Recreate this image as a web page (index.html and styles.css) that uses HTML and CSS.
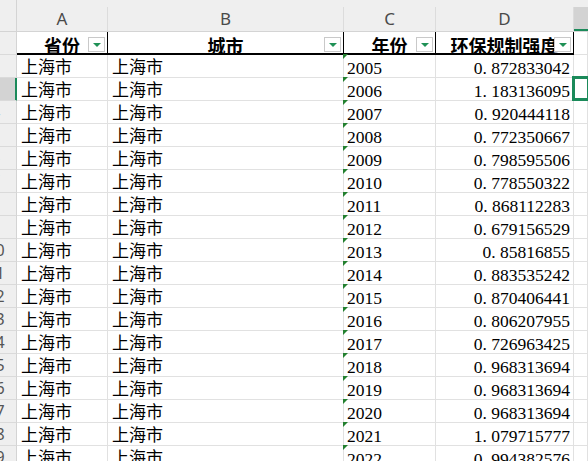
FILE: index.html
```html
<!DOCTYPE html>
<html lang="zh-CN">
<head>
<meta charset="utf-8">
<title>Sheet</title>
<link rel="stylesheet" href="styles.css">
</head>
<body>
<div class="sheet">
  <div class="corner"></div>
  <div class="ch"><span class="lbl">A</span></div>
  <div class="ch"><span class="lbl">B</span></div>
  <div class="ch"><span class="lbl">C</span></div>
  <div class="ch"><span class="lbl">D</span></div>
  <div class="ch sel"><span class="lbl"></span></div>

  <div class="rh"><span>1</span></div>
  <div class="hd">省份<span class="fb"></span></div>
  <div class="hd">城市<span class="fb"></span></div>
  <div class="hd">年份<span class="fb"></span></div>
  <div class="hd">环保规制强度<span class="fb"></span></div>
  <div class="cell hd-e"></div>

  <div class="rh"><span>2</span></div><div class="cell txt">上海市</div><div class="cell txt">上海市</div><div class="cell yr">2005</div><div class="cell val">0<span class="dot">.</span>872833042</div><div class="cell"></div>
  <div class="rh active"><span>3</span></div><div class="cell txt">上海市</div><div class="cell txt">上海市</div><div class="cell yr">2006</div><div class="cell val">1<span class="dot">.</span>183136095</div><div class="cell cur"></div>
  <div class="rh"><span>4</span></div><div class="cell txt">上海市</div><div class="cell txt">上海市</div><div class="cell yr">2007</div><div class="cell val">0<span class="dot">.</span>920444118</div><div class="cell"></div>
  <div class="rh"><span>5</span></div><div class="cell txt">上海市</div><div class="cell txt">上海市</div><div class="cell yr">2008</div><div class="cell val">0<span class="dot">.</span>772350667</div><div class="cell"></div>
  <div class="rh"><span>6</span></div><div class="cell txt">上海市</div><div class="cell txt">上海市</div><div class="cell yr">2009</div><div class="cell val">0<span class="dot">.</span>798595506</div><div class="cell"></div>
  <div class="rh"><span>7</span></div><div class="cell txt">上海市</div><div class="cell txt">上海市</div><div class="cell yr">2010</div><div class="cell val">0<span class="dot">.</span>778550322</div><div class="cell"></div>
  <div class="rh"><span>8</span></div><div class="cell txt">上海市</div><div class="cell txt">上海市</div><div class="cell yr">2011</div><div class="cell val">0<span class="dot">.</span>868112283</div><div class="cell"></div>
  <div class="rh"><span>9</span></div><div class="cell txt">上海市</div><div class="cell txt">上海市</div><div class="cell yr">2012</div><div class="cell val">0<span class="dot">.</span>679156529</div><div class="cell"></div>
  <div class="rh"><span>10</span></div><div class="cell txt">上海市</div><div class="cell txt">上海市</div><div class="cell yr">2013</div><div class="cell val">0<span class="dot">.</span>85816855</div><div class="cell"></div>
  <div class="rh"><span>11</span></div><div class="cell txt">上海市</div><div class="cell txt">上海市</div><div class="cell yr">2014</div><div class="cell val">0<span class="dot">.</span>883535242</div><div class="cell"></div>
  <div class="rh"><span>12</span></div><div class="cell txt">上海市</div><div class="cell txt">上海市</div><div class="cell yr">2015</div><div class="cell val">0<span class="dot">.</span>870406441</div><div class="cell"></div>
  <div class="rh"><span>13</span></div><div class="cell txt">上海市</div><div class="cell txt">上海市</div><div class="cell yr">2016</div><div class="cell val">0<span class="dot">.</span>806207955</div><div class="cell"></div>
  <div class="rh"><span>14</span></div><div class="cell txt">上海市</div><div class="cell txt">上海市</div><div class="cell yr">2017</div><div class="cell val">0<span class="dot">.</span>726963425</div><div class="cell"></div>
  <div class="rh"><span>15</span></div><div class="cell txt">上海市</div><div class="cell txt">上海市</div><div class="cell yr">2018</div><div class="cell val">0<span class="dot">.</span>968313694</div><div class="cell"></div>
  <div class="rh"><span>16</span></div><div class="cell txt">上海市</div><div class="cell txt">上海市</div><div class="cell yr">2019</div><div class="cell val">0<span class="dot">.</span>968313694</div><div class="cell"></div>
  <div class="rh"><span>17</span></div><div class="cell txt">上海市</div><div class="cell txt">上海市</div><div class="cell yr">2020</div><div class="cell val">0<span class="dot">.</span>968313694</div><div class="cell"></div>
  <div class="rh"><span>18</span></div><div class="cell txt">上海市</div><div class="cell txt">上海市</div><div class="cell yr">2021</div><div class="cell val">1<span class="dot">.</span>079715777</div><div class="cell"></div>
  <div class="rh"><span>19</span></div><div class="cell txt">上海市</div><div class="cell txt">上海市</div><div class="cell yr">2022</div><div class="cell val">0<span class="dot">.</span>994382576</div><div class="cell"></div>
</div>
</body>
</html>
```

FILE: styles.css
```css
html, body {
  margin: 0;
  padding: 0;
  background: #ffffff;
  overflow: hidden;
}

.sheet {
  display: grid;
  grid-template-columns: 17px 91px 236px 92px 138px 1fr;
  grid-template-rows: 32px 23px repeat(18, 23px);
  width: 588px;
  height: 461px;
  overflow: hidden;
}

.sheet > div {
  box-sizing: border-box;
  min-width: 0;
  min-height: 0;
}

/* column header bar */
.corner {
  background: #efefef;
  border-right: 1px solid #d4d4d4;
  border-bottom: 1px solid #d4d4d4;
}

.ch {
  background: #efefef;
  border-bottom: 1px solid #d4d4d4;
  padding-top: 7px;
}

.ch .lbl {
  display: flex;
  align-items: center;
  justify-content: center;
  height: 24px;
  box-sizing: border-box;
  border-right: 1px solid #dcdcdc;
  font-family: "Noto Sans", "Liberation Sans", sans-serif;
  font-size: 17px;
  color: #4a4a4a;
  padding-bottom: 1px;
}

.ch.sel .lbl {
  background: #d3d3d3;
  border-right: none;
  box-shadow: inset 0 -2px 0 #1b8a5a;
}

/* row header */
.rh {
  background: #efefef;
  border-right: 1px solid #d4d4d4;
  border-bottom: 1px solid #dadada;
  overflow: hidden;
  font-family: "Noto Sans", "Liberation Sans", sans-serif;
  font-size: 16px;
  line-height: 22px;
  color: #555555;
}

.rh span {
  display: block;
  width: 37px;
  margin-left: -23px;
  text-align: center;
}

.rh.active {
  background: #d3d3d3;
  border-right-color: #1b8a5a;
  box-shadow: inset -1px 0 0 #1b8a5a;
  color: #1b6e48;
}

/* table header row */
.hd {
  position: relative;
  display: flex;
  justify-content: center;
  border-right: 1px solid #000000;
  border-bottom: 2px solid #000000;
  padding-top: 3px;
  font-family: "Noto Sans CJK SC", "Noto Sans", sans-serif;
  font-weight: 700;
  font-size: 18px;
  line-height: 20px;
  color: #000000;
  white-space: nowrap;
  overflow: hidden;
}

.hd-e {
  border-bottom: 1px solid #e1e1e1;
}

.fb {
  position: absolute;
  right: 2px;
  bottom: 1px;
  width: 17px;
  height: 15px;
  box-sizing: border-box;
  background: #ffffff;
  border: 1px solid #c9c9c9;
}

.fb::after {
  content: "";
  position: absolute;
  left: 4px;
  top: 5px;
  border-left: 4px solid transparent;
  border-right: 4px solid transparent;
  border-top: 4px solid #1f9156;
}

/* data cells */
.cell {
  position: relative;
  border-right: 1px solid #e1e1e1;
  border-bottom: 1px solid #e1e1e1;
  color: #000000;
  white-space: nowrap;
}

.txt {
  padding-left: 4px;
  font-family: "Noto Sans CJK SC", "Noto Sans", sans-serif;
  font-size: 17px;
  line-height: 22px;
}

.yr,
.val {
  padding-top: 2px;
  font-family: "Liberation Serif", "Times New Roman", serif;
  font-size: 17.5px;
  line-height: 22px;
}

.yr {
  padding-left: 3px;
}

.yr::before {
  content: "";
  position: absolute;
  left: -1px;
  top: -1px;
  border-top: 5px solid #23802f;
  border-right: 5px solid transparent;
}

.val {
  padding-right: 3px;
  text-align: right;
}

.dot {
  display: inline-block;
  width: 0.5em;
  text-align: left;
}

.cur::after {
  content: "";
  position: absolute;
  left: -2px;
  top: -2px;
  right: -3px;
  bottom: -1px;
  border: 3px solid #1b8a5a;
}
```
